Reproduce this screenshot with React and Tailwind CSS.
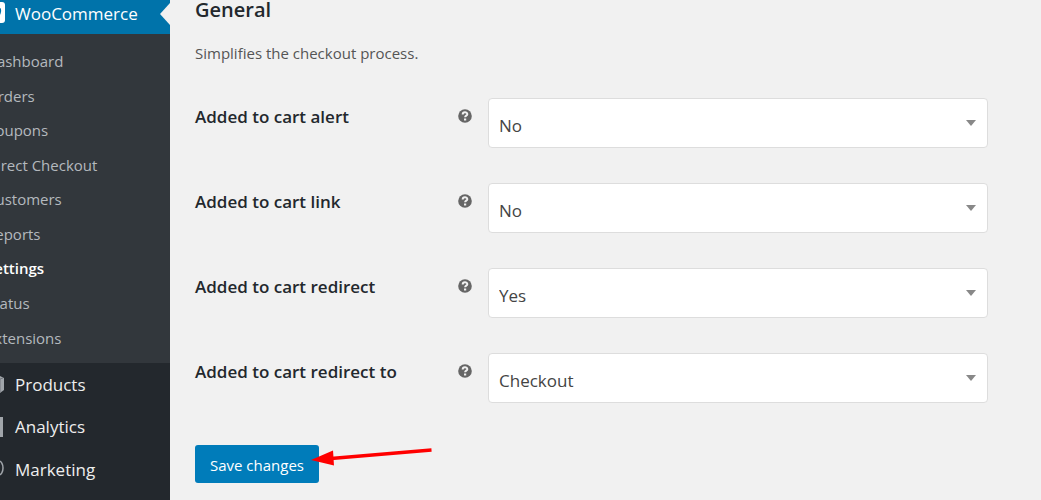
import React, { useState } from 'react';

const submenu = [
  'Dashboard',
  'Orders',
  'Coupons',
  'Direct Checkout',
  'Customers',
  'Reports',
  'Settings',
  'Status',
  'Extensions',
];

const yesNo = ['No', 'Yes'];

const fields = [
  { id: 'cart_alert', label: 'Added to cart alert', value: 'No', options: yesNo },
  { id: 'cart_link', label: 'Added to cart link', value: 'No', options: yesNo },
  { id: 'cart_redirect', label: 'Added to cart redirect', value: 'Yes', options: yesNo },
  { id: 'cart_redirect_to', label: 'Added to cart redirect to', value: 'Checkout', options: ['Cart', 'Checkout'] },
];

const ProductsIcon = () => (
  <svg className="h-5 w-5" viewBox="0 0 20 20" fill="#a0a5aa">
    <path d="M9 3l7-1 4 2v12l-4 3-7-1z" />
    <path d="M10 4l6 1 3-1M16 5v13" stroke="#72777c" fill="none" />
  </svg>
);

const AnalyticsIcon = () => (
  <svg className="h-5 w-5" viewBox="0 0 20 20" fill="#a0a5aa">
    <path d="M15 0h4v20h-4zM8 6h4v14H8zM1 11h4v9H1z" />
  </svg>
);

const MarketingIcon = () => (
  <svg className="h-5 w-5" viewBox="0 0 20 20" fill="none" stroke="#a0a5aa" strokeWidth="1.5">
    <ellipse cx="15" cy="8" rx="4" ry="7" />
    <path d="M15 1L2 6v5l13 4" />
  </svg>
);

const mainMenu = [
  { name: 'Products', icon: <ProductsIcon /> },
  { name: 'Analytics', icon: <AnalyticsIcon /> },
  { name: 'Marketing', icon: <MarketingIcon /> },
];

const HelpIcon = () => (
  <svg className="h-4 w-4 shrink-0" viewBox="0 0 16 16" aria-label="Help">
    <circle cx="8" cy="8" r="6.8" fill="#666" />
    <path d="M5.7 6.4c0-2.8 4.6-2.7 4.6-.2 0 1.6-2.200 1.400-2.200 3.100" fill="none" stroke="#f1f1f1" strokeWidth="2" />
    <path d="M7 10.500h2.200v2H7z" fill="#f1f1f1" />
  </svg>
);

const Sidebar = () => (
  <nav className="w-[170px] shrink-0 overflow-hidden bg-[#23282d]">
    <a href="#woocommerce" className="relative flex h-[34px] items-center bg-[#0073aa] pb-1.5 text-[17px] text-white">
      <svg className="-ml-5 h-6 w-[25px] shrink-0" viewBox="0 0 25 24">
        <rect width="25" height="21" rx="3" fill="#fff" />
        <path d="M17 5q5 0 4 5t-5 5" fill="#0073aa" />
      </svg>
      <span className="ml-2.5">WooCommerce</span>
      <svg className="absolute right-0 top-[3px] h-[22px] w-[10px]" viewBox="0 0 10 22">
        <path d="M10 0v22L0 11z" fill="#f1f1f1" />
      </svg>
    </a>
    <ul className="flex h-[329px] flex-col bg-[#32373c] pb-2 pt-2.5">
      {submenu.map((item) => (
        <li key={item} className="-ml-3.5 flex flex-1 items-center">
          <a
            href="#submenu"
            className={item === 'Settings' ? 'text-[15px] font-semibold text-white' : 'text-[15px] text-[#b4b9be]'}
          >
            {item}
          </a>
        </li>
      ))}
    </ul>
    <ul className="flex h-32 flex-col">
      {mainMenu.map((item) => (
        <li key={item.name} className="-ml-4 flex flex-1 items-center">
          <a href="#menu" className="flex items-center gap-[11px] text-[17px] text-[#eee]">
            {item.icon}
            {item.name}
          </a>
        </li>
      ))}
    </ul>
  </nav>
);

const App = () => {
  const [values, setValues] = useState(Object.fromEntries(fields.map((f) => [f.id, f.value])));

  const handleChange = (id, value) => {
    setValues({ ...values, [id]: value });
  };

  return (
    <div className="flex min-h-screen bg-[#f1f1f1] font-['Open_Sans',sans-serif] text-[#23282d]">
      <Sidebar />

      <main className="min-w-0 flex-1 pl-[25px] pr-[53px]">
        <h2 className="text-[20px] font-semibold leading-5">General</h2>
        <p className="mt-[23px] text-[15px] leading-5 text-[#555]">Simplifies the checkout process.</p>

        <form onSubmit={(e) => e.preventDefault()}>
          <div className="mt-[35px] flex flex-col gap-[35px]">
            {fields.map((f) => (
              <div key={f.id} className="flex items-start">
                <div className="flex w-[293px] shrink-0 items-start justify-between pr-[15px] pt-[7px]">
                  <label htmlFor={f.id} className="text-[17px] font-semibold leading-6">{f.label}</label>
                  <span className="pt-[3px]"><HelpIcon /></span>
                </div>
                <div className="relative max-w-[500px] flex-1">
                  <select
                    id={f.id}
                    value={values[f.id]}
                    onChange={(e) => handleChange(f.id, e.target.value)}
                    className="h-[50px] w-full appearance-none rounded border border-[#ddd] bg-white pl-2.5 pr-8 pt-1.5 text-[17px] text-[#444]"
                  >
                    {f.options.map((o) => <option key={o}>{o}</option>)}
                  </select>
                  <svg className="pointer-events-none absolute right-3 top-[22px] h-1.5 w-2.5" viewBox="0 0 10 6">
                    <path d="M0 0h10L5 6z" fill="#888" />
                  </svg>
                </div>
              </div>
            ))}
          </div>

          <div className="relative mt-[42px] w-fit">
            <button type="submit" className="h-[38px] w-[124px] rounded-[3px] bg-[#007cba] pt-0.5 text-[15px] text-white">
              Save changes
            </button>
            {/* pointer to the save button */}
            <svg className="pointer-events-none absolute left-[116px] top-0 h-6 w-[124px]" viewBox="0 0 124 24">
              <path d="M20 13.5L120.5 5" stroke="#f00" strokeWidth="3.5" />
              <path d="M0 15L22 5.5L23 20.5z" fill="#f00" />
            </svg>
          </div>
        </form>
      </main>
    </div>
  );
};

export default App;
